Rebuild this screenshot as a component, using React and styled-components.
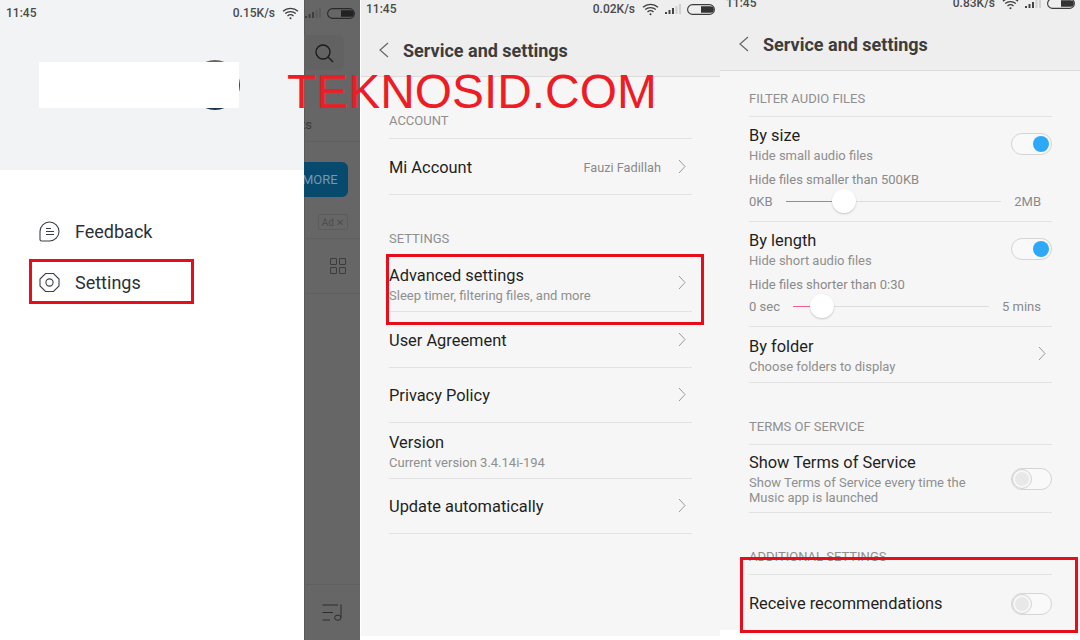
import React from 'react';
import styled, { createGlobalStyle } from 'styled-components';

const GlobalStyle = createGlobalStyle`
  html, body {
    margin: 0;
    padding: 0;
    background: #fff;
  }
  body {
    font-family: Roboto, 'Liberation Sans', sans-serif;
    overflow: hidden;
  }
`;

const Page = styled.div`
  position: relative;
  display: flex;
  width: 1080px;
  height: 640px;
  overflow: hidden;
  background: #fff;
`;

const Panel = styled.div`
  position: relative;
  width: 360px;
  height: 640px;
  flex: none;
  overflow: hidden;
`;

const DrawerPanel = styled(Panel)`
  display: flex;
`;

const Watermark = styled.div`
  position: absolute;
  left: 287px;
  top: 68px;
  font-family: 'Liberation Sans', Arial, sans-serif;
  font-size: 47.9px;
  line-height: 48px;
  color: #ee1c25;
  white-space: nowrap;
`;

const RedBox = styled.div`
  position: absolute;
  left: ${p => p.$x}px;
  top: ${p => p.$y}px;
  width: ${p => p.$w}px;
  height: ${p => p.$h}px;
  box-sizing: border-box;
  border: 3px solid #e60e1a;
`;

/* drawer, left shot */
const Drawer = styled.div`
  width: 304px;
  flex: none;
  background: #fff;
`;

const DrawerHead = styled.div`
  position: relative;
  height: 170px;
  background: #f2f3f5;
`;

const DrawerStatus = styled.div`
  display: flex;
  align-items: center;
  justify-content: space-between;
  height: 26px;
  padding: 0 5px 0 6px;
  font-size: 12px;
  font-weight: 500;
  color: #4a4a4a;
`;

const Speed = styled.div`
  display: flex;
  align-items: center;
  gap: 7px;
`;

const Avatar = styled.div`
  width: 50px;
  height: 50px;
  margin: 34px 0 0 190px;
  border-radius: 50%;
  background: linear-gradient(180deg, #6a6a5c 0%, #3a3a3a 50%, #16324f 100%);
`;

const AvatarMask = styled.div`
  position: absolute;
  left: 39px;
  top: 62px;
  width: 200px;
  height: 46px;
  background: #fff;
`;

const Menu = styled.div`
  padding-top: 36px;
`;

const MenuItem = styled.div`
  display: flex;
  align-items: center;
  gap: 15px;
  height: 51px;
  padding-left: 39px;
  font-size: 18px;
  color: #2b3038;
`;

/* dimmed page behind the drawer */
const Dim = styled.div`
  flex: 1;
  display: flex;
  flex-direction: column;
  background: #666;
  box-shadow: inset 1px 0 0 #5a5a5a;
`;

const DimBlock = styled.div`
  box-sizing: border-box;
  height: ${p => p.$h ? `${p.$h}px` : 'auto'};
  flex: ${p => p.$h ? 'none' : 1};
  border-bottom: ${p => p.$line ? '1px solid #5f5f5f' : 'none'};
`;

const DimStatus = styled.div`
  display: flex;
  align-items: center;
  gap: 6px;
  height: 26px;
  padding-left: 1px;
`;

const SearchButton = styled.div`
  display: flex;
  align-items: center;
  justify-content: center;
  width: 40px;
  height: 35px;
  margin-top: 9px;
  border-radius: 0 6px 6px 0;
  background: #626262;
`;

const ClippedText = styled.div`
  margin: 47px 0 0 -3px;
  font-size: 13px;
  line-height: 16px;
  color: #3a3a3a;
`;

const MoreButton = styled.div`
  display: flex;
  align-items: center;
  width: 44px;
  height: 35px;
  margin-top: 20px;
  overflow: hidden;
  border-radius: 0 6px 6px 0;
  background: #08496e;
  font-size: 13px;
  text-indent: -2px;
  color: #6f9ab4;
  white-space: nowrap;
`;

const AdBadge = styled.div`
  display: flex;
  align-items: center;
  justify-content: center;
  box-sizing: border-box;
  width: 30px;
  height: 16px;
  margin: 17px 0 0 14px;
  border: 1px solid #5c5c5c;
  border-radius: 2px;
  font-size: 10px;
  color: #4d4d4d;
`;

const IconCell = styled(DimBlock)`
  display: flex;
  align-items: center;
  justify-content: flex-end;
  padding-right: ${p => p.$right}px;
`;

/* settings screens */
const Screen = styled.div`
  position: relative;
  box-sizing: border-box;
  height: 636px;
  margin-top: ${p => p.$shift || 0}px;
  background: #f6f6f6;

  &::before {
    content: '';
    display: ${p => p.$edge ? 'block' : 'none'};
    position: absolute;
    left: 0;
    top: 0;
    bottom: 0;
    width: 1px;
    background: #fff;
  }
`;

const Header = styled.div`
  box-sizing: border-box;
  height: 77px;
  background: #eeeeee;
  border-bottom: 1px solid #dcdcdc;
`;

const StatusBar = styled.div`
  display: flex;
  align-items: center;
  justify-content: space-between;
  height: 18px;
  padding: 0 5px 0 6px;
  font-size: 12px;
  font-weight: 500;
  color: #4a4a4a;
`;

const StatusRight = styled.div`
  display: flex;
  align-items: center;
  gap: 6px;
`;

const SpeedText = styled.span`
  margin-right: 1px;
`;

const TitleBar = styled.div`
  display: flex;
  align-items: center;
  gap: 14px;
  height: 64px;
  padding-left: 18px;
  font-size: 18px;
  font-weight: 700;
  color: #3c3c3c;
`;

const List = styled.div`
  padding: 0 28px 0 29px;
`;

const SectionLabel = styled.div`
  box-sizing: border-box;
  display: flex;
  align-items: flex-end;
  height: ${p => p.$h}px;
  padding-bottom: ${p => p.$pad || 8}px;
  border-bottom: 1px solid #e2e2e2;
  font-size: 13px;
  line-height: 18px;
  color: #8f8f8f;
`;

const Row = styled.div`
  box-sizing: border-box;
  display: flex;
  align-items: center;
  justify-content: space-between;
  height: ${p => p.$h}px;
  padding-top: ${p => p.$pad || 0}px;
  border-bottom: 1px solid #e2e2e2;
`;

const SliderRow = styled.div`
  box-sizing: border-box;
  height: 105px;
  padding-top: 8px;
  border-bottom: 1px solid #e2e2e2;
`;

const RowTop = styled.div`
  display: flex;
  align-items: center;
  justify-content: space-between;
`;

const RowTitle = styled.div`
  font-size: 16.4px;
  line-height: 22px;
  color: #1f1f1f;
`;

const RowSub = styled.div`
  margin-top: 1px;
  max-width: 240px;
  font-size: 13px;
  line-height: 15px;
  color: #8f8f8f;
`;

const RowEnd = styled.div`
  display: flex;
  align-items: center;
  gap: 17px;
  padding-right: 6px;
  font-size: 12.75px;
  color: #8a8a8a;
`;

const Hint = styled.div`
  margin-top: 8px;
  font-size: 13px;
  line-height: 18px;
  color: #8a8a8a;
`;

const SliderLine = styled.div`
  display: flex;
  align-items: center;
  gap: 13px;
  height: 24px;
  padding-right: 11px;
  font-size: 13px;
  color: #8a8a8a;
`;

const Track = styled.div`
  position: relative;
  flex: 1;
  height: 1px;
  background: #dddddd;
`;

const TrackFill = styled.div`
  height: 1px;
  width: ${p => p.$value}%;
  background: #f0608a;
`;

const Thumb = styled.div`
  position: absolute;
  left: ${p => p.$value}%;
  top: -12px;
  width: 24px;
  height: 24px;
  margin-left: -12px;
  border-radius: 50%;
  background: #fff;
  box-shadow: 0 1px 2px rgba(0, 0, 0, 0.2);
`;

const Toggle = styled.div`
  box-sizing: border-box;
  display: flex;
  align-items: center;
  justify-content: ${p => p.$on ? 'flex-end' : 'flex-start'};
  flex: none;
  width: 41px;
  height: 22px;
  padding: 0 ${p => p.$on ? 2 : 0}px;
  border: 1px solid #d4d4d4;
  border-radius: 11px;
  background: #f9f9f9;
`;

const ToggleDot = styled.div`
  box-sizing: border-box;
  width: ${p => p.$on ? 16 : 20}px;
  height: ${p => p.$on ? 16 : 20}px;
  border-radius: 50%;
  background: ${p => p.$on ? '#2ea9f9' : '#e8e8e8'};
  border: ${p => p.$on ? 'none' : '1px solid #d6d6d6'};
  box-shadow: ${p => p.$on ? 'none' : 'inset 0 0 0 2px #f7f7f7'};
`;

const ChevronSvg = styled.svg`
  margin-bottom: 3px;
`;

const Wifi = ({ color = '#3c3c3c' }) => (
  <svg width="17" height="13" viewBox="0 0 17 13" fill="none" stroke={color} strokeWidth="1.3">
    <path d="M1 4.2C5.2 0.4 11.8 0.4 16 4.2" />
    <path d="M3.2 6.6C6.2 4 10.8 4 13.8 6.6" />
    <path d="M5.5 8.9C7.2 7.5 9.8 7.5 11.5 8.9" />
    <circle cx="8.5" cy="11.3" r="1" fill={color} stroke="none" />
  </svg>
);

const Signal = ({ color = '#9a9a9a', dark = '#444' }) => (
  <svg width="16" height="10" viewBox="0 0 16 10">
    <rect x="0" y="8" width="2" height="2" fill={dark} />
    <rect x="3.5" y="6" width="2" height="4" fill={dark} />
    <rect x="7" y="4" width="2" height="6" fill={dark} />
    <rect x="10.5" y="2" width="2" height="8" fill={color} />
    <rect x="14" y="0" width="2" height="10" fill={color} />
  </svg>
);

const Battery = ({ stroke = '#3c3c3c', fill = '#333' }) => (
  <svg width="28" height="11" viewBox="0 0 28 11">
    <rect x="0.6" y="0.6" width="26.8" height="9.8" rx="4.9" fill="none" stroke={stroke} strokeWidth="1.1" />
    <path d="M14 2.2H23.5a3.3 3.3 0 0 1 0 6.6H14Z" fill={fill} />
  </svg>
);

const Chevron = () => (
  <ChevronSvg width="8" height="15" viewBox="0 0 8 15" fill="none" stroke="#9a9a9a" strokeWidth="1">
    <path d="M1 1L7 7.5L1 14" />
  </ChevronSvg>
);

const BackArrow = () => (
  <svg width="11" height="16" viewBox="0 0 11 16" fill="none" stroke="#666" strokeWidth="1.2">
    <path d="M10 1L2 8L10 15" />
  </svg>
);

const FeedbackIcon = () => (
  <svg width="21" height="21" viewBox="0 0 21 21" fill="none" stroke="#3b3f46" strokeWidth="1.1">
    <path d="M10.5 1A9.5 9.5 0 1 1 10.5 20H2.5Q1 20 1 18.5V10.5A9.5 9.5 0 0 1 10.5 1Z" />
    <path d="M7 7.5H12M7 10.5H15M7 13.5H15" strokeWidth="1.2" />
  </svg>
);

const SettingsIcon = () => (
  <svg width="21" height="21" viewBox="0 0 21 21" fill="none" stroke="#3b3f46" strokeWidth="1.1">
    <path d="M6.5 1.5H14.5L20 7V14L14.5 19.5H6.5L1 14V7Z" />
    <circle cx="10.5" cy="10.5" r="3.6" />
  </svg>
);

const SearchIcon = () => (
  <svg width="20" height="20" viewBox="0 0 20 20" fill="none" stroke="#1c1c1c" strokeWidth="1.4">
    <circle cx="9" cy="9" r="7" />
    <path d="M14 14L19 19" />
  </svg>
);

const GridIcon = () => (
  <svg width="16" height="16" viewBox="0 0 16 16" fill="none" stroke="#3b3b3b" strokeWidth="1">
    <rect x="0.5" y="0.5" width="6" height="6" rx="0.5" />
    <rect x="9.5" y="0.5" width="6" height="6" rx="0.5" />
    <rect x="0.5" y="9.5" width="6" height="6" rx="0.5" />
    <rect x="9.5" y="9.5" width="6" height="6" rx="0.5" />
  </svg>
);

const MusicListIcon = () => (
  <svg width="20" height="17" viewBox="0 0 20 17" fill="none" stroke="#2c2c2c" strokeWidth="1">
    <path d="M0.5 1H16M0.5 8.5H11M0.5 16H8" />
    <path d="M19 0.5V13.5" />
    <ellipse cx="15.8" cy="13.7" rx="3.2" ry="2.6" />
  </svg>
);

const Status = ({ speed }) => (
  <StatusBar>
    <span>11:45</span>
    <StatusRight>
      <SpeedText>{speed}</SpeedText>
      <Wifi />
      <Signal color="#cfcfcf" />
      <Battery />
    </StatusRight>
  </StatusBar>
);

const Slider = ({ min, max, value }) => (
  <SliderLine>
    <span>{min}</span>
    <Track>
      <TrackFill $value={value} />
      <Thumb $value={value} />
    </Track>
    <span>{max}</span>
  </SliderLine>
);

const Switch = ({ on }) => (
  <Toggle $on={on}>
    <ToggleDot $on={on} />
  </Toggle>
);

const Head = ({ speed }) => (
  <Header>
    <Status speed={speed} />
    <TitleBar>
      <BackArrow />
      <span>Service and settings</span>
    </TitleBar>
  </Header>
);

const LinkRow = ({ title, sub, h, pad, value }) => (
  <Row $h={h} $pad={pad ?? (sub ? 0 : 2)}>
    <div>
      <RowTitle>{title}</RowTitle>
      {sub && <RowSub>{sub}</RowSub>}
    </div>
    <RowEnd>
      {value && <span>{value}</span>}
      <Chevron />
    </RowEnd>
  </Row>
);

const App = () => (
  <Page>
    <GlobalStyle />

    <DrawerPanel>
      <Drawer>
        <DrawerHead>
          <DrawerStatus>
            <span>11:45</span>
            <Speed>
              <span>0.15K/s</span>
              <Wifi />
            </Speed>
          </DrawerStatus>
          <Avatar />
          <AvatarMask />
        </DrawerHead>
        <Menu>
          <MenuItem>
            <FeedbackIcon />
            Feedback
          </MenuItem>
          <MenuItem>
            <SettingsIcon />
            Settings
          </MenuItem>
        </Menu>
      </Drawer>
      <Dim>
        <DimBlock $h={142} $line>
          <DimStatus>
            <Signal color="#5a5a5a" dark="#3e3e3e" />
            <Battery stroke="#2a2a2a" fill="#222" />
          </DimStatus>
          <SearchButton>
            <SearchIcon />
          </SearchButton>
          <ClippedText>ts</ClippedText>
        </DimBlock>
        <DimBlock $h={97} $line>
          <MoreButton>MORE</MoreButton>
          <AdBadge>Ad ✕</AdBadge>
        </DimBlock>
        <IconCell $h={55} $line $right={14}>
          <GridIcon />
        </IconCell>
        <DimBlock $line />
        <IconCell $h={55} $right={18}>
          <MusicListIcon />
        </IconCell>
      </Dim>
      <RedBox $x={29} $y={259} $w={165} $h={45} />
    </DrawerPanel>

    <Panel>
      <Screen $edge>
        <Head speed="0.02K/s" />
        <List>
          <SectionLabel $h={62}>ACCOUNT</SectionLabel>
          <LinkRow h={56} title="Mi Account" value="Fauzi Fadillah" />
          <SectionLabel $h={60} $pad={6}>SETTINGS</SectionLabel>
          <LinkRow h={57} pad={2} title="Advanced settings" sub="Sleep timer, filtering files, and more" />
          <LinkRow h={56} title="User Agreement" />
          <LinkRow h={55} title="Privacy Policy" />
          <Row $h={56}>
            <div>
              <RowTitle>Version</RowTitle>
              <RowSub>Current version 3.4.14i-194</RowSub>
            </div>
          </Row>
          <LinkRow h={55} title="Update automatically" />
        </List>
      </Screen>
      <RedBox $x={26} $y={254} $w={318} $h={71} />
    </Panel>

    <Panel>
      <Screen $shift={-6}>
        <Head speed="0.83K/s" />
        <List>
          <SectionLabel $h={46}>FILTER AUDIO FILES</SectionLabel>
          <SliderRow>
            <RowTop>
              <div>
                <RowTitle>By size</RowTitle>
                <RowSub>Hide small audio files</RowSub>
              </div>
              <Switch on />
            </RowTop>
            <Hint>Hide files smaller than 500KB</Hint>
            <Slider min="0KB" max="2MB" value={27} />
          </SliderRow>
          <SliderRow>
            <RowTop>
              <div>
                <RowTitle>By length</RowTitle>
                <RowSub>Hide short audio files</RowSub>
              </div>
              <Switch on />
            </RowTop>
            <Hint>Hide files shorter than 0:30</Hint>
            <Slider min="0 sec" max="5 mins" value={14.6} />
          </SliderRow>
          <LinkRow h={56} title="By folder" sub="Choose folders to display" />
          <SectionLabel $h={62}>TERMS OF SERVICE</SectionLabel>
          <Row $h={68}>
            <div>
              <RowTitle>Show Terms of Service</RowTitle>
              <RowSub>Show Terms of Service every time the Music app is launched</RowSub>
            </div>
            <Switch />
          </Row>
          <SectionLabel $h={62}>ADDITIONAL SETTINGS</SectionLabel>
          <Row $h={56} $pad={2}>
            <RowTitle>Receive recommendations</RowTitle>
            <Switch />
          </Row>
        </List>
      </Screen>
      <RedBox $x={20} $y={557} $w={338} $h={76} />
    </Panel>

    <Watermark>TEKNOSID.COM</Watermark>
  </Page>
);

export default App;
